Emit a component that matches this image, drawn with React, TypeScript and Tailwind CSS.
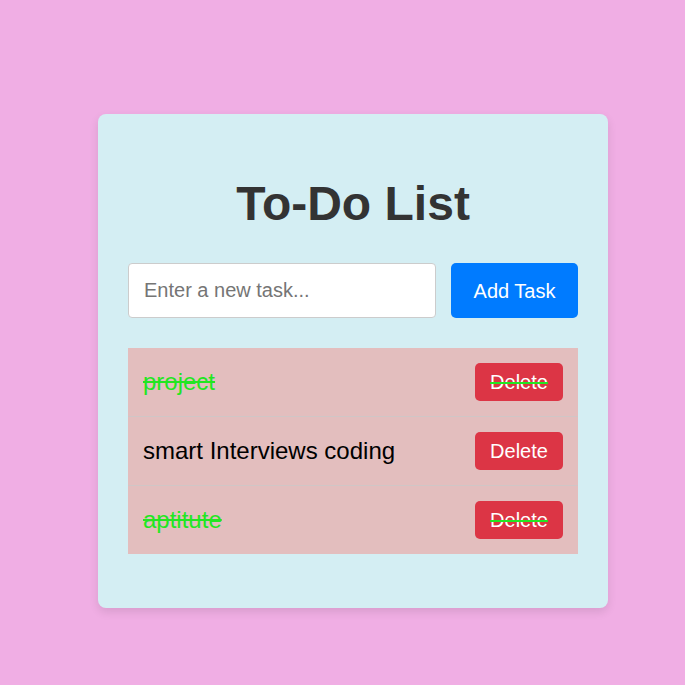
import React from "react";

const tasks = [
  { text: "project", done: true },
  { text: "smart Interviews coding", done: false },
  { text: "aptitute", done: true },
];

export default function App() {
  return (
    <div
      className="min-h-[685px] w-full bg-[#f0aee4] pt-[114px] pl-[98px]"
      style={{ fontFamily: '"Liberation Sans", Arial, sans-serif' }}
    >
      <div className="w-[510px] rounded-[8px] bg-[#d4eef3] px-[30px] pt-[36px] pb-[54px] shadow-[0_4px_10px_rgba(0,0,0,0.1)]">
        <h1 className="mt-[30px] text-center text-[48px] font-bold leading-[48px] text-[#333]">
          To-Do List
        </h1>
        <div className="mt-[35px] flex gap-[15px]">
          <input
            type="text"
            placeholder="Enter a new task..."
            className="h-[55px] min-w-0 flex-1 rounded-[4px] border border-[#ccc] bg-white px-[15px] text-[20px] text-[#000] outline-none placeholder:text-[#757575]"
          />
          <button className="h-[55px] w-[127px] rounded-[5px] bg-[#007bff] text-[20px] text-white">
            Add Task
          </button>
        </div>
        <ul className="mt-[30px] bg-[#e3bebe]">
          {tasks.map((t, i) => (
            <li
              key={i}
              className={
                "flex items-center justify-between px-[15px] py-[15px] text-[24px] " +
                (i < tasks.length - 1 ? "border-b border-[#d0c6c6] " : "") +
                (t.done ? "text-[#22e622] line-through" : "text-black")
              }
            >
              <span>{t.text}</span>
              <button className="flex h-[38px] w-[88px] items-center justify-center rounded-[5px] bg-[#dc3545] text-[20px] text-white">
                Delete
              </button>
            </li>
          ))}
        </ul>
      </div>
    </div>
  );
}
